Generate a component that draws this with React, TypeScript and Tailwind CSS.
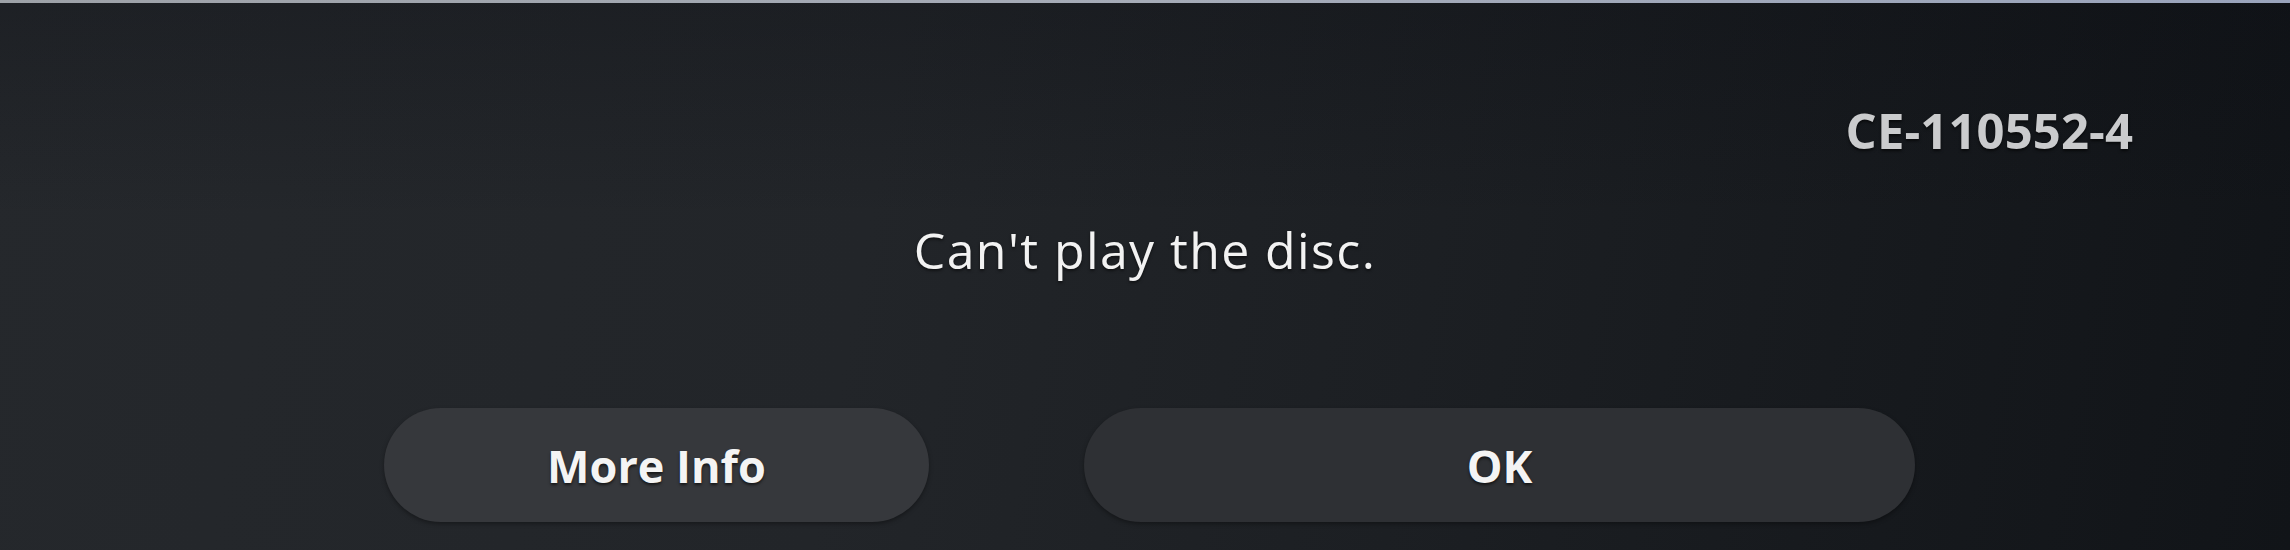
import React from "react";

export default function App() {
  return (
    <div
      className="relative w-[2290px] h-[550px] overflow-hidden flex flex-col bg-[linear-gradient(100deg,#25282c_0%,#222529_38%,#1c1f23_62%,#111418_100%)]"
      style={{ fontFamily: '"Open Sans", "Noto Sans", sans-serif' }}
    >
      <div className="absolute inset-0 bg-[linear-gradient(180deg,rgba(8,10,16,0.25)_0%,rgba(8,10,16,0)_40%)] pointer-events-none" />
      <div className="relative h-[3px] w-full bg-[linear-gradient(90deg,#9ea2a8_0%,#a6acb8_50%,#9aa4bc_100%)]" />
      <div className="relative flex justify-end pt-[103px] pr-[157px]">
        <span className="text-[49px] leading-none font-bold tracking-[0.1px] text-[#cacbcd] [text-shadow:0_2px_3px_rgba(0,0,0,0.6)]">
          CE-110552-4
        </span>
      </div>
      <div className="relative flex justify-center mt-[70px]">
        <span className="text-[50px] leading-none font-normal tracking-[1.4px] text-[#f2f2f2] [text-shadow:0_2px_3px_rgba(0,0,0,0.5)]">
          Can't play the disc.
        </span>
      </div>
      <div className="relative flex mt-[133px] pl-[384px] gap-[155px]">
        <div className="w-[545px] h-[114px] rounded-full bg-[#36383c] flex items-center justify-center shadow-[0_2px_4px_rgba(0,0,0,0.35)]">
          <span className="text-[45px] leading-none font-bold text-[#f4f4f4] [text-shadow:0_2px_3px_rgba(0,0,0,0.6)]">
            More Info
          </span>
        </div>
        <div className="w-[831px] h-[114px] rounded-full bg-[#2e3034] flex items-center justify-center shadow-[0_2px_4px_rgba(0,0,0,0.35)]">
          <span className="text-[45px] leading-none font-bold text-[#f4f4f4] [text-shadow:0_2px_3px_rgba(0,0,0,0.6)]">
            OK
          </span>
        </div>
      </div>
    </div>
  );
}
